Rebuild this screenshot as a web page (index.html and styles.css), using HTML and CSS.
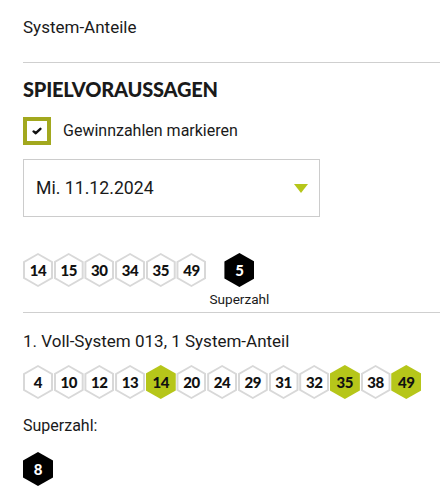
FILE: index.html
```html
<!DOCTYPE html>
<html lang="de">
<head>
<meta charset="utf-8">
<link rel="stylesheet" href="styles.css">
</head>
<body>
<div class="page">
  <div class="intro">System-Anteile</div>
  <hr class="rule rule--first">
  <h2 class="title">SPIELVORAUSSAGEN</h2>
  <label class="check">
    <span class="check-box">
      <svg width="10" height="8" viewBox="0 0 10 8"><path d="M1.6 4.4 L3.8 6.2 L8.4 1.8" fill="none" stroke="#111" stroke-width="2.4" stroke-linecap="round" stroke-linejoin="round"/></svg>
    </span>
    <span class="check-label">Gewinnzahlen markieren</span>
  </label>
  <div class="select">
    <span class="select-text">Mi. 11.12.2024</span>
    <svg class="select-arrow" width="14" height="9" viewBox="0 0 14 9"><polygon points="0,0 14,0 7,9" fill="#b6c61a"/></svg>
  </div>
  <div class="draw">
    <div class="balls">
      <span class="ball"><span class="ball-in">14</span></span>
      <span class="ball"><span class="ball-in">15</span></span>
      <span class="ball"><span class="ball-in">30</span></span>
      <span class="ball"><span class="ball-in">34</span></span>
      <span class="ball"><span class="ball-in">35</span></span>
      <span class="ball"><span class="ball-in">49</span></span>
    </div>
    <div class="super">
      <span class="ball ball--super"><span class="ball-in">5</span></span>
      <span class="super-label">Superzahl</span>
    </div>
  </div>
  <hr class="rule rule--second">
  <div class="system-title">1. Voll-System 013, 1 System-Anteil</div>
  <div class="balls balls--system">
    <span class="ball"><span class="ball-in">4</span></span>
    <span class="ball"><span class="ball-in">10</span></span>
    <span class="ball"><span class="ball-in">12</span></span>
    <span class="ball"><span class="ball-in">13</span></span>
    <span class="ball ball--hit"><span class="ball-in">14</span></span>
    <span class="ball"><span class="ball-in">20</span></span>
    <span class="ball"><span class="ball-in">24</span></span>
    <span class="ball"><span class="ball-in">29</span></span>
    <span class="ball"><span class="ball-in">31</span></span>
    <span class="ball"><span class="ball-in">32</span></span>
    <span class="ball ball--hit"><span class="ball-in">35</span></span>
    <span class="ball"><span class="ball-in">38</span></span>
    <span class="ball ball--hit"><span class="ball-in">49</span></span>
  </div>
  <div class="super-title">Superzahl:</div>
  <div class="balls balls--single">
    <span class="ball ball--super"><span class="ball-in">8</span></span>
  </div>
</div>
</body>
</html>
```

FILE: styles.css
```css
html, body {
  margin: 0;
  padding: 0;
  background: #fff;
}
body {
  font-family: Roboto, "Liberation Sans", sans-serif;
  color: #1a1a1a;
}
.page {
  padding-left: 23px;
  display: flex;
  flex-direction: column;
  align-items: flex-start;
}
.intro,
.check-label,
.select-text,
.system-title,
.super-title,
.super-label {
  font-stretch: 90%;
}
.intro {
  font-size: 17px;
  line-height: 20px;
  margin-top: 17px;
}
.rule {
  align-self: stretch;
  border: 0;
  height: 1px;
  background: #cfcfcf;
  margin: 0;
}
.rule--first {
  margin-top: 25px;
}
.title {
  font-family: Lato, "Noto Sans", sans-serif;
  font-weight: 900;
  font-size: 20px;
  line-height: 24px;
  margin: 14px 0 0;
  letter-spacing: -0.2px;
}
.check {
  display: flex;
  align-items: center;
  margin-top: 16px;
}
.check-box {
  box-sizing: border-box;
  width: 28px;
  height: 28px;
  border: 4px solid #a2a81e;
  display: flex;
  align-items: center;
  justify-content: center;
}
.check-label {
  font-size: 16px;
  line-height: 20px;
  margin-left: 12px;
}
.select {
  box-sizing: border-box;
  width: 297px;
  height: 58px;
  border: 1px solid #cccccc;
  margin-top: 14px;
  display: flex;
  align-items: center;
  justify-content: space-between;
  padding: 0 11px 0 12px;
}
.select-text {
  font-size: 17.7px;
  line-height: 20px;
}
.select-arrow {
  display: block;
  margin-top: 1px;
}
.draw {
  display: flex;
  align-items: flex-start;
  margin-top: 36px;
}
.balls {
  display: flex;
  gap: 0.7px;
}
.ball {
  box-sizing: border-box;
  width: 30px;
  height: 34px;
  padding: 2px;
  background: #d8d8d8;
  clip-path: polygon(50% 0, 100% 25%, 100% 75%, 50% 100%, 0 75%, 0 25%);
  display: flex;
}
.ball-in {
  flex: 1;
  background: #fff;
  clip-path: polygon(50% 0, 100% 25%, 100% 75%, 50% 100%, 0 75%, 0 25%);
  display: flex;
  align-items: center;
  justify-content: center;
  font-family: Lato, "Noto Sans", sans-serif;
  font-weight: 900;
  font-size: 15px;
  line-height: 1;
  color: #111;
  letter-spacing: -0.4px;
  padding-top: 1px;
}
.ball--hit {
  background: #b6c61a;
}
.ball--hit .ball-in {
  background: #b6c61a;
}
.ball--super {
  background: #000;
}
.ball--super .ball-in {
  background: #000;
  color: #fff;
}
.super {
  display: flex;
  flex-direction: column;
  align-items: center;
  margin-left: 3px;
}
.super-label {
  font-size: 13.6px;
  line-height: 18px;
  margin-top: 3px;
}
.rule--second {
  margin-top: 4px;
}
.system-title {
  font-size: 17px;
  line-height: 20px;
  margin-top: 18px;
}
.balls--system {
  margin-top: 14px;
}
.super-title {
  font-size: 16px;
  line-height: 20px;
  margin-top: 17px;
}
.balls--single {
  margin-top: 16px;
}
```
